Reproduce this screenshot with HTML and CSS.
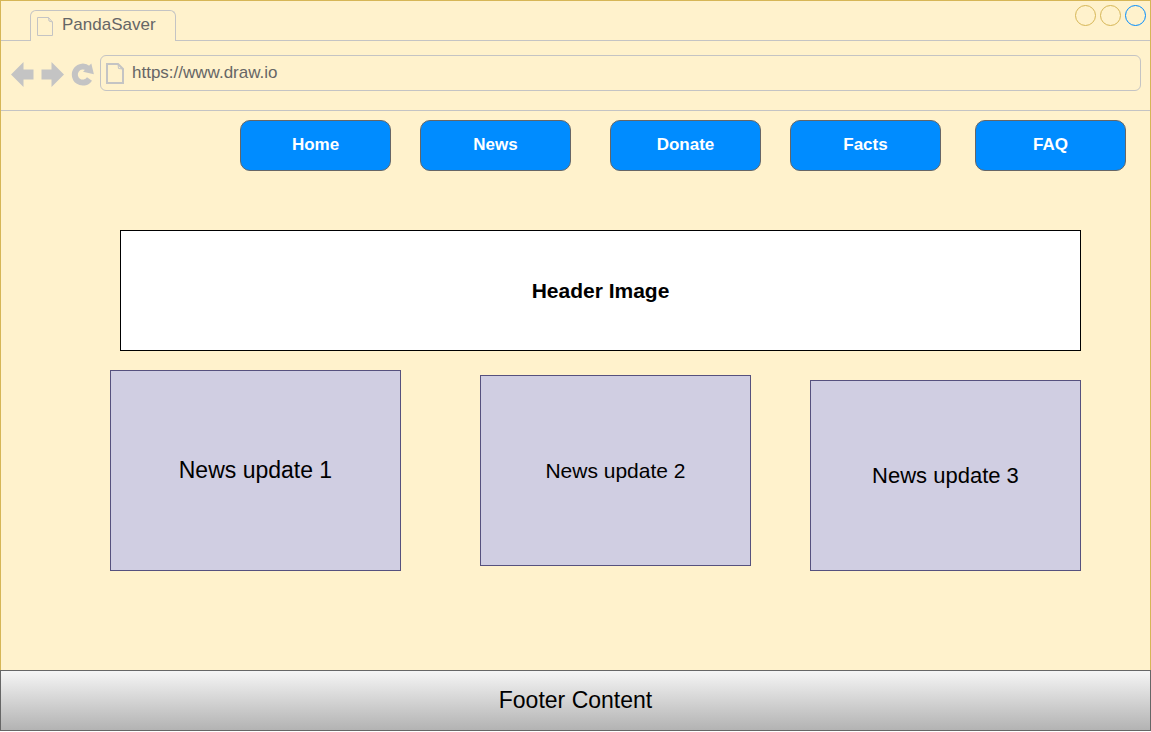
FILE: index.html
```html
<!DOCTYPE html>
<html lang="en">
<head>
<meta charset="utf-8">
<title>PandaSaver</title>
<link rel="stylesheet" href="styles.css">
</head>
<body>
<div class="page">
  <div class="window">
    <div class="tab-strip">
      <div class="strip-start"></div>
      <div class="tab">
        <svg class="tab-icon" width="17" height="20" viewBox="0 0 17 20" aria-hidden="true"><path d="M.5.5h11l4 4.500v13.500H.5zM11.500.5l.5 3.500 3.500 1" fill="none" stroke="#c4c4c4"/></svg>
        <span>PandaSaver</span>
      </div>
      <div class="strip-end">
        <button class="dot" type="button" aria-label="Minimize"></button>
        <button class="dot" type="button" aria-label="Maximize"></button>
        <button class="dot dot-close" type="button" aria-label="Close"></button>
      </div>
    </div>
    <div class="toolbar">
      <button class="tool" type="button" aria-label="Back"><svg width="24" height="26" viewBox="0 0 24 26"><path d="M0 13.500 12.500 1V8.500H22.500V18.500H12.500V26z" fill="#c4c4c4"/></svg></button>
      <button class="tool" type="button" aria-label="Forward"><svg width="24" height="26" viewBox="0 0 24 26"><path d="M23 13.500 10.500 1V8.500H.5V18.500H10.500V26z" fill="#c4c4c4"/></svg></button>
      <button class="tool" type="button" aria-label="Reload"><svg width="23" height="26" viewBox="0 0 23 26"><path d="M18.500 18A8 8 0 1 1 17 7.500" fill="none" stroke="#c4c4c4" stroke-width="6"/><path d="M20.300 2.500 22.900 13.300 12 10.800z" fill="#c4c4c4"/></svg></button>
      <label class="address">
        <svg width="18" height="21" viewBox="0 0 18 21" aria-hidden="true"><path d="M1 1h11l5 5v14H1z" fill="none" stroke="#c4c4c4" stroke-width="2"/><path d="M12 1l.5 4.500L17 6" fill="none" stroke="#c4c4c4"/></svg>
        <input type="text" value="https://www.draw.io" aria-label="Address">
      </label>
    </div>
    <nav class="nav">
      <a class="nav-link" href="#home">Home</a>
      <a class="nav-link" href="#news">News</a>
      <a class="nav-link nav-wide-gap" href="#donate">Donate</a>
      <a class="nav-link" href="#facts">Facts</a>
      <a class="nav-link nav-mid-gap" href="#faq">FAQ</a>
    </nav>
    <main class="main">
      <h1 class="hero">Header Image</h1>
      <div class="news">
        <article class="card card-first">News update 1</article>
        <article class="card card-second">News update 2</article>
        <article class="card card-third">News update 3</article>
      </div>
    </main>
  </div>
  <footer class="footer">Footer Content</footer>
</div>
</body>
</html>
```
FILE: styles.css
```css
* {
  box-sizing: border-box;
}

body {
  margin: 0;
  background: #fff;
  color: #000;
  font-family: "Liberation Sans", Arial, sans-serif;
}

svg {
  display: block;
  flex: none;
}

.page {
  display: flex;
  flex-direction: column;
  min-height: calc(100vh - 1px);
}

.window {
  flex: 1;
  border: 1px solid #d6b656;
  border-bottom: 0;
  background: #fff2cc;
}

.tab-strip {
  display: flex;
  height: 40px;
  color: #666;
  font-size: 17px;
}

.strip-start,
.strip-end {
  border-bottom: 1px solid #c4c4c4;
}

.strip-start {
  width: 29px;
}

.strip-end {
  display: flex;
  flex: 1;
  justify-content: flex-end;
  gap: 4px;
  padding: 4px 4px 0 0;
}

.tab {
  display: flex;
  align-items: flex-start;
  gap: 8px;
  min-width: 146px;
  margin-top: 9px;
  padding: 4px 19px 0 6px;
  border: 1px solid #c4c4c4;
  border-bottom: 0;
  border-radius: 6px 6px 0 0;
  line-height: 20px;
}

.tab-icon {
  margin-top: 2px;
}

.dot {
  width: 21px;
  height: 21px;
  padding: 0;
  border: 1px solid #d6b656;
  border-radius: 50%;
  background: none;
}

.dot-close {
  border-color: #008cff;
}

.toolbar {
  display: flex;
  align-items: center;
  gap: 6px;
  padding: 14px 9px 19px 10px;
  border-bottom: 1px solid #c4c4c4;
}

.tool {
  padding: 2px 0 0;
  border: 0;
  background: none;
}

.address {
  display: flex;
  flex: 1;
  align-items: center;
  gap: 8px;
  height: 36px;
  padding: 0 5px;
  border: 1px solid #c4c4c4;
  border-radius: 6px;
}

.address input {
  flex: 1;
  min-width: 0;
  height: 20px;
  padding: 0;
  border: 0;
  outline: 0;
  background: none;
  color: #666;
  font: 17px "Liberation Sans", Arial, sans-serif;
}

.nav {
  display: flex;
  justify-content: flex-end;
  gap: 29px;
  padding: 9px 24px 0;
}

.nav-link {
  width: 151px;
  padding: 13px 0 15px;
  border: 1px solid #666;
  border-radius: 10px;
  background: #008cff;
  color: #fff;
  font-size: 17px;
  font-weight: bold;
  line-height: 21px;
  text-align: center;
  text-decoration: none;
}

.nav-wide-gap {
  margin-left: 10px;
}

.nav-mid-gap {
  margin-left: 5px;
}

.main {
  padding: 59px 69px 99px 109px;
}

.hero {
  display: flex;
  align-items: center;
  justify-content: center;
  height: 121px;
  margin: 0 0 19px 10px;
  border: 1px solid #000;
  background: #fff;
  font-size: 21px;
}

.news {
  display: flex;
  height: 201px;
}

.card {
  display: flex;
  flex: 271;
  align-items: center;
  justify-content: center;
  border: 1px solid #56517e;
  background: #d0cee2;
}

.card-first {
  flex: 291;
  font-size: 23px;
}

.card-second {
  margin: 5px 59px 5px 79px;
  font-size: 21px;
}

.card-third {
  margin-top: 10px;
  font-size: 22px;
}

.footer {
  padding: 16px 0;
  border: 1px solid #666;
  background: linear-gradient(#f5f5f5, #b3b3b3);
  font-size: 23px;
  line-height: 27px;
  text-align: center;
}
```
